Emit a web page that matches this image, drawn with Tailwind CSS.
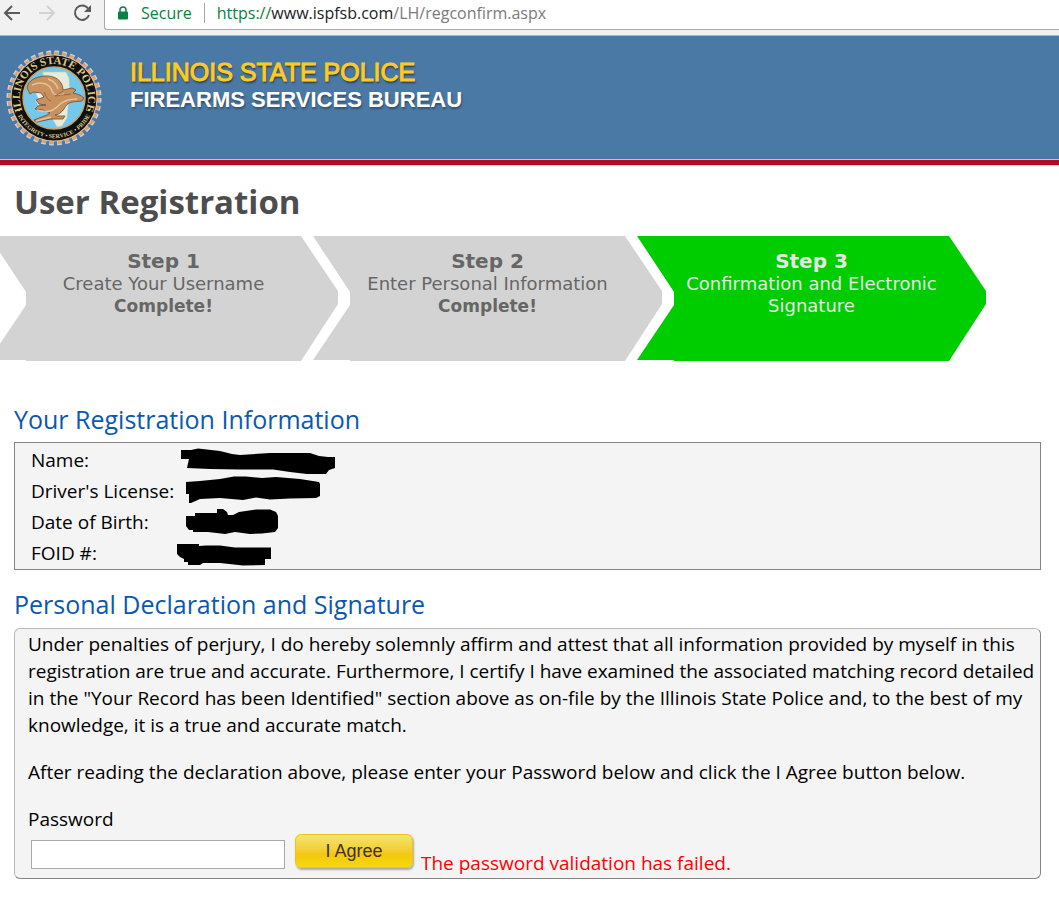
<!DOCTYPE html>
<html lang="en">
<head>
    <meta charset="UTF-8">
    <meta name="viewport" content="width=device-width, initial-scale=1.0">
    <title>User Registration</title>
    <script src="https://cdn.jsdelivr.net/npm/@tailwindcss/browser@4"></script>
</head>
<body class="bg-white text-black font-['Open_Sans','Noto_Sans',sans-serif] overflow-x-hidden">
    <!-- Browser bar -->
    <div class="flex h-9 bg-[#f1f1f1] border-b border-[#b4b4b4]">
        <nav class="flex w-[104px] shrink-0 h-[26px] items-center">
            <button type="button" aria-label="Back" class="w-6 h-6">
                <svg viewBox="0 0 24 24" class="size-6" fill="none" stroke="#5a5a5a" stroke-width="2"><path d="M20 12H5M12 5l-7 7 7 7"/></svg>
            </button>
            <button type="button" aria-label="Forward" class="w-6 h-6 ml-3" disabled>
                <svg viewBox="0 0 24 24" class="size-6" fill="none" stroke="#d2d2d2" stroke-width="2"><path d="M3 12h15M11 5l7 7-7 7"/></svg>
            </button>
            <button type="button" aria-label="Reload" class="w-6 h-6 ml-2.5">
                <svg viewBox="0 0 24 24" class="size-6" fill="none"><path d="M18 7.5A7.2 7.2 0 1 0 19 14" stroke="#5a5a5a" stroke-width="2"/><path d="M21 4v7h-7z" fill="#5a5a5a"/></svg>
            </button>
        </nav>
        <div class="flex grow h-[30px] items-center pb-1 pl-3 bg-white border-l border-b border-[#a8a8a8] rounded-bl-[3px] text-base leading-6 whitespace-nowrap">
            <svg viewBox="0 0 12 14" class="w-3 h-3.5 shrink-0"><path d="M3 6V4a3 3 0 0 1 6 0v2" fill="none" stroke="#0b8043" stroke-width="1.5"/><rect x="1" y="5.5" width="10" height="8" rx="1" fill="#0b8043"/></svg>
            <span class="ml-3 text-[#0b8043]">Secure</span>
            <span class="w-px h-5 mx-3 bg-[#a8a8a8]"></span>
            <span class="text-[#7a7a7a]"><span class="text-[#0b8043]">https://</span><span class="text-[#222]">www.ispfsb.com</span>/LH/regconfirm.aspx</span>
        </div>
    </div>

    <!-- Banner -->
    <header class="flex h-[129px] bg-[#4a79a6] border-b-[5px] border-[#b20a20] pl-1.5 pt-3.5 shadow-[inset_0_-1px_0_#c4c4c4]">
        <svg viewBox="0 0 96 96" class="size-24 shrink-0" role="img" aria-label="Illinois State Police seal">
            <defs>
                <path id="topArc" d="M18 64A34 34 0 1 1 78 64"/>
                <path id="bottomArc" d="M8 54A40.500 40.500 0 0 0 88 54"/>
            </defs>
            <circle cx="48" cy="48" r="45" fill="none" stroke="#c9d3dc" stroke-width="5" stroke-dasharray="4.600 3.254"/>
            <circle cx="48" cy="48" r="44.500" fill="none" stroke="#e0a06c" stroke-width="3.500" stroke-dasharray="4 3.766"/>
            <circle cx="48" cy="48" r="43.500" fill="#d9c3ad"/>
            <circle cx="48" cy="48" r="42.500" fill="#10100f"/>
            <circle cx="48" cy="48" r="31" fill="#74c8ec" stroke="#c5a568" stroke-width="1.500"/>
            <path d="M37 22h23l3 6 1 16-2 13-1 11-5 8-5 1-4-7-1-10-8-10z" fill="#e9ebd9" stroke="#b7c9b9" stroke-width=".6"/>
            <path d="M30 42l8-1 2 5-7 3-2-3zM29 50l7-1 4 4-8 2z" fill="#f3efe6"/>
            <path d="M21 38C22 30 30 27 38 26c11-1 19 5 19 14l9-2 4 2-3 3c4 1 8 2 11 5l-2 3-10 1c-4 1-6 3-8 7-3 4-6 6-9 6l2 1 8 0-2 3-12 0-14 3-3-2 13-5 3-2-7-3-8-1 3-3 8-1-7-1-3-4 8-3-3-4-8-1-3 2z" fill="#c8925f" stroke="#70482e" stroke-width=".8"/>
            <path d="M26 35c8-4 18-2 20 6 2 5 7 5 12 3M31 60c9 3 17 1 22-5 4-4 11-6 18-6M42 29c6 2 9 5 10 10M30 71l15-4" fill="none" stroke="#e8c097" stroke-width="1.600"/>
            <path d="M38 42c2 4 3 8 7 9M57 41l-8 5 16-2" fill="none" stroke="#8a5a38" stroke-width=".8"/>
            <g class="font-['Liberation_Serif',serif] font-bold" fill="#dec88c" text-anchor="middle">
                <text font-size="11"><textPath href="#topArc" startOffset="50%">ILLINOIS STATE POLICE</textPath></text>
                <text font-size="6"><textPath href="#bottomArc" startOffset="50%">INTEGRITY • SERVICE • PRIDE</textPath></text>
            </g>
            <circle cx="13" cy="60" r="1.200" fill="#dec88c"/>
            <circle cx="83" cy="60" r="1.200" fill="#dec88c"/>
        </svg>
        <div class="ml-7 pt-2 font-['Liberation_Sans',sans-serif] whitespace-nowrap">
            <p class="text-[25px] leading-7 text-[#ffcb1f] [-webkit-text-stroke:1px_#ffcb1f] [text-shadow:1px_2px_2px_#26394d]">ILLINOIS STATE POLICE</p>
            <p class="text-[22px] leading-7 font-bold text-white [text-shadow:1px_2px_2px_#34536f]">FIREARMS SERVICES BUREAU</p>
        </div>
    </header>

    <main class="pl-3.5 pr-[18px] pt-3 border-t border-[#d8d8d8]">
        <h1 class="text-[33px] leading-[48px] font-bold text-[#4d4d4d]">User Registration</h1>

        <!-- Step arrows -->
        <ol class="flex -ml-[25px] mt-2.5 font-['DejaVu_Sans',sans-serif] text-center text-lg leading-[22px] text-[#666]">
            <li class="w-[349px] h-[125px] shrink-0 px-9 pt-3.5 bg-[#d3d3d3] [clip-path:polygon(0_0,312px_0,349px_55px,349px_68px,312px_125px,37px_125px,37px_124px,0_124px,37px_69px,37px_56px)]">
                <h2 class="text-xl leading-[23px] font-bold">Step 1</h2>
                <p>Create Your Username</p>
                <p class="text-[17px] leading-[22px] font-bold">Complete!</p>
            </li>
            <li class="w-[349px] h-[125px] shrink-0 -ml-[25px] px-9 pt-3.5 bg-[#d3d3d3] [clip-path:polygon(0_0,312px_0,349px_55px,349px_68px,312px_125px,37px_125px,37px_124px,0_124px,37px_69px,37px_56px)]">
                <h2 class="text-xl leading-[23px] font-bold">Step 2</h2>
                <p>Enter Personal Information</p>
                <p class="text-[17px] leading-[22px] font-bold">Complete!</p>
            </li>
            <li class="w-[349px] h-[125px] shrink-0 -ml-[25px] px-9 pt-3.5 bg-[#00cd00] text-[#e6e6e6] [clip-path:polygon(0_0,312px_0,349px_55px,349px_68px,312px_125px,37px_125px,37px_124px,0_124px,37px_69px,37px_56px)]">
                <h2 class="text-xl leading-[23px] font-bold">Step 3</h2>
                <p>Confirmation and Electronic Signature</p>
            </li>
        </ol>

        <h2 class="mt-10 text-[25px] leading-9 text-[#0a58b0]">Your Registration Information</h2>
        <section class="mt-[5px] px-4 pt-0.5 bg-[#f4f4f4] border border-[#848484]">
            <table class="text-[19px] leading-[31px] text-left">
                <tbody>
                    <tr class="h-[31px]">
                        <th class="w-[146px] p-0 font-normal whitespace-nowrap">Name:</th>
                        <td class="p-0"><svg viewBox="177 445 160 31" class="block w-40 h-[31px]" role="img" aria-label="Hidden name"><path d="M181 450H191L198 448.500 220 451Q230 454 240 455L270 453H310L319 456 328 457 335 457V468L329 470 326 474H307L290 472 273 469.500H240L210 469 187 468 189 459H181z"/></svg></td>
                    </tr>
                    <tr class="h-[31px]">
                        <th class="p-0 font-normal whitespace-nowrap">Driver's License:</th>
                        <td class="p-0"><svg viewBox="177 476 160 31" class="block w-40 h-[31px]" role="img" aria-label="Hidden license"><path d="M186 482L200 481 220 479 234 476.500H246L262 478 276 477 300 479 319 482 320 484V496L316 498 290 498.500 270 499.500 256 497.500 243 500 220 498 200 499 191 503H189V494H186z"/></svg></td>
                    </tr>
                    <tr class="h-[31px]">
                        <th class="p-0 font-normal whitespace-nowrap">Date of Birth:</th>
                        <td class="p-0"><svg viewBox="177 507 160 31" class="block w-40 h-[31px]" role="img" aria-label="Hidden date of birth"><path d="M186 516H195V513H217V509H223L227 512 228 515H233L239 512 256 509.500H270L276 512 278 516V528L275 532 262 533.500 250 534 235 532 225 534 208 532H193V530H189L186 526z"/></svg></td>
                    </tr>
                    <tr class="h-[31px]">
                        <th class="p-0 font-normal whitespace-nowrap">FOID #:</th>
                        <td class="p-0"><svg viewBox="177 538 160 31" class="block w-40 h-[31px]" role="img" aria-label="Hidden FOID number"><path d="M177 544H199V546L206 545.500H220L235 547.500H271V559H265V565L243 565.500 220 563 203 563 200 565H188V562H184V559L180 557 177 554z"/></svg></td>
                    </tr>
                </tbody>
            </table>
        </section>

        <h2 class="mt-4 text-[25px] leading-9 text-[#0a58b0]">Personal Declaration and Signature</h2>
        <form class="mt-1.5 pl-[13px] pr-1 pt-0.5 pb-[9px] bg-[#f4f4f4] border border-[#b8b8b8] border-b-[#848484] border-r-[#848484] rounded-md text-[19px] leading-[27px]" onsubmit="return false">
            <p>Under penalties of perjury, I do hereby solemnly affirm and attest that all information provided by myself in this registration are true and accurate. Furthermore, I certify I have examined the associated matching record detailed in the "Your Record has been Identified" section above as on-file by the Illinois State Police and, to the best of my knowledge, it is a true and accurate match.</p>
            <p class="mt-5">After reading the declaration above, please enter your Password below and click the I Agree button below.</p>
            <label for="password" class="block mt-5">Password</label>
            <div class="flex items-end ml-[3px] pt-px">
                <input type="password" id="password" class="w-[254px] h-[29px] px-1 bg-white border border-[#a9a9a9]">
                <button type="submit" class="ml-2.5 mb-px w-[118px] h-[34px] pb-px rounded-md border border-[#f2c21b] bg-linear-to-b from-[#f1e468] from-5% via-[#f3c80f] via-60% to-[#f5d90d] shadow-[1px_2px_2px_#aaa] font-['Liberation_Sans',sans-serif] text-lg leading-7 text-[#3d3515]">I Agree</button>
                <span class="ml-2 -mb-2 text-[#f00]" role="alert">The password validation has failed.</span>
            </div>
        </form>
    </main>
</body>
</html>
